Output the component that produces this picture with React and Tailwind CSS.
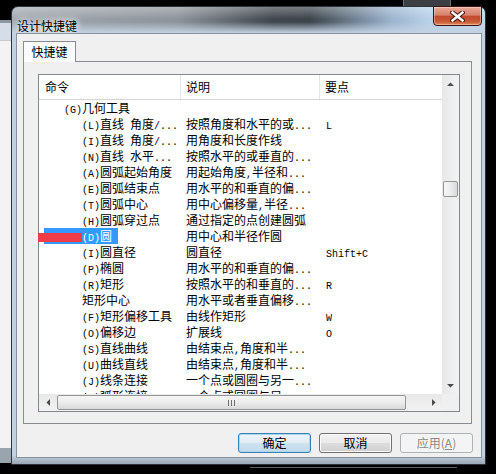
import React from 'react'

const ui = "font-['Noto_Sans_CJK_SC',sans-serif]"

const rows = [
  { c: '(G)几何工具', top: true },
  { c: '(L)直线 角度/...', d: '按照角度和水平的或...', k: 'L' },
  { c: '(I)直线 角度/...', d: '用角度和长度作线' },
  { c: '(N)直线 水平...', d: '按照水平的或垂直的...' },
  { c: '(A)圆弧起始角度', d: '用起始角度,半径和...' },
  { c: '(E)圆弧结束点', d: '用水平的和垂直的偏...' },
  { c: '(T)圆弧中心', d: '用中心偏移量,半径...' },
  { c: '(H)圆弧穿过点', d: '通过指定的点创建圆弧' },
  { c: '(D)圆', d: '用中心和半径作圆', sel: true },
  { c: '(I)圆直径', d: '圆直径', k: 'Shift+C' },
  { c: '(P)椭圆', d: '用水平的和垂直的偏...' },
  { c: '(R)矩形', d: '按照水平的和垂直的...', k: 'R' },
  { c: '矩形中心', d: '用水平或者垂直偏移...' },
  { c: '(F)矩形偏移工具', d: '由线作矩形', k: 'W' },
  { c: '(O)偏移边', d: '扩展线', k: 'O' },
  { c: '(S)直线曲线', d: '由结束点,角度和半...' },
  { c: '(U)曲线直线', d: '由结束点,角度和半...' },
  { c: '(J)线条连接', d: '一个点或圆圈与另一...' },
  { c: '(K)弧形连接', d: '一个点或圆圈与另一...' },
]

// ascii runs get a half-width mono face, like the old bitmap font
function T({ s }) {
  if (!s) return null
  return s.split(/([\x20-\x7e]+)/).map((p, i) =>
    /^[\x20-\x7e]+$/.test(p) ? (
      <span key={i} className="font-['Liberation_Mono',monospace] text-[10px]">
        {p}
      </span>
    ) : (
      p
    )
  )
}

function Arrow({ dir }) {
  const vert = dir === 'up' || dir === 'down'
  const pts = {
    up: '0,4 3.5,0.5 7,4',
    down: '0,0 7,0 3.5,3.5',
    left: '4,0 4,7 0.5,3.5',
    right: '0,0 0,7 3.5,3.5',
  }[dir]
  return (
    <svg width={vert ? 7 : 4} height={vert ? 4 : 7} viewBox={vert ? '0 0 7 4' : '0 0 4 7'}>
      <polygon points={pts} fill="#4a4a4a" />
    </svg>
  )
}

function Row({ r }) {
  return (
    <div className="relative flex h-[16px] shrink-0 whitespace-nowrap text-[12px] leading-[16px] text-black">
      {r.sel && <div className="absolute left-[5px] top-0 h-[16px] w-[74px] bg-[#3399ff]" />}
      <div className={`relative w-[142px] shrink-0 ${r.top ? 'pl-[25px]' : 'pl-[43px]'} ${r.sel ? 'text-white' : ''}`}>
        <T s={r.c} />
      </div>
      <div className="w-[139px] shrink-0 pl-[5px]">
        <T s={r.d} />
      </div>
      <div className="flex-1 pl-[6px]">
        <T s={r.k} />
      </div>
    </div>
  )
}

function Btn({ children, kind }) {
  const styles = {
    def: 'border-[#3c7fb1] bg-[linear-gradient(180deg,#eef5fa_0%,#e1ecf5_48%,#cfe2f0_52%,#c3daec_100%)] shadow-[inset_0_0_0_1px_#a8d8f4] text-black',
    norm: 'border-[#707070] bg-[linear-gradient(180deg,#f2f2f2_0%,#ebebeb_48%,#dddddd_52%,#cfcfcf_100%)] shadow-[inset_0_0_0_1px_#fbfbfb] text-black',
    off: 'border-[#adb2b5] bg-[#f4f4f4] text-[#8a8a8a]',
  }[kind]
  return (
    <div className={`flex h-[20px] w-[73px] items-center justify-center rounded-[3px] border text-[12px] leading-[16px] ${styles}`}>
      {children}
    </div>
  )
}

export default function App() {
  return (
    <div className={`relative h-[474px] w-[496px] overflow-hidden bg-black ${ui}`}>
      {/* windows behind the dialog */}
      <div className="absolute left-0 top-[20px] h-[3px] w-[11px] bg-[#8d97a1]" />
      <div className="absolute left-0 top-[23px] h-[17px] w-[11px] bg-[#d5dee8]" />
      <div className="absolute left-0 top-[40px] h-[408px] w-[11px] border-t border-[#c9c9c9] bg-[#f3f3f3]" />
      <div className="absolute left-0 top-[448px] h-[15px] w-[11px] bg-[#9aa4ae]" />
      <div className="absolute left-[403px] top-0 h-[6px] w-[48px] border-x border-[#6a6f75] bg-[#3b3f44]" />
      <div className="absolute left-[250px] top-[467px] h-[1px] w-[207px] bg-[#5b5f64]" />

      {/* dialog */}
      <div className="absolute left-[11px] top-[6px] flex h-[459px] w-[475px] flex-col rounded-t-[7px] border border-[#2c333b] bg-[linear-gradient(180deg,rgba(255,255,255,0.3)_0px,rgba(195,210,226,0)_12px,rgba(195,210,226,0)_15px,#c3d2e2_26px,#c3d2e2_calc(100%_-_9px),#9aa6b3_100%),linear-gradient(90deg,#a3aab1_0%,#8d949b_35%,#40474e_55%,#3d444b_63%,#9bb3cc_80%,#b9d0e9_88%,#c1d6ec_100%)] pb-[6px] pl-[4px] pr-[3px]">
        <div className="h-[26px] shrink-0 pl-[1px] pt-[5px]">
          <span className="text-[12px] leading-[16px] text-black [text-shadow:0_0_6px_#fff,0_0_10px_#fff]">设计快捷键</span>
        </div>

        <div className="absolute right-[3px] top-[-1px] flex h-[20px] w-[49px] items-center justify-center rounded-b-[4px] border border-[#3d1510] bg-[linear-gradient(180deg,#eaa99b_0%,#d9806c_45%,#c24a2f_52%,#c85a35_80%,#e08a5a_100%)] shadow-[inset_0_0_0_1px_rgba(255,255,255,0.35)]">
          <svg width="15" height="11" viewBox="0 0 15 11">
            <path d="M2.5 1.5 L12.5 9.5 M12.5 1.5 L2.5 9.5" stroke="#4a1e16" strokeWidth="4.6" strokeLinecap="square" />
            <path d="M2.5 1.5 L12.5 9.5 M12.5 1.5 L2.5 9.5" stroke="#fff" strokeWidth="2.4" strokeLinecap="square" />
          </svg>
        </div>

        {/* client area */}
        <div className="flex h-[425px] w-[466px] flex-col border border-[#8593a1] bg-[#f0f0f0] pl-[6px] pr-[8px] pt-[7px]">
          <div className="relative z-10 -mb-[1px] flex h-[21px] w-[53px] items-center justify-center border-x border-t border-[#898c95] bg-[#fbfbfb] pb-[1px] text-[12px] leading-[16px] text-black">
            快捷键
          </div>

          <div className="h-[363px] w-[449px] border border-[#898c95] bg-[#f0f0f0] pl-[14px] pt-[12px]">
            {/* list view */}
            <div className="grid h-[338px] w-[422px] grid-cols-[403px_17px] grid-rows-[319px_17px] border border-[#828790] bg-white">
              <div className="flex flex-col overflow-hidden">
                <div className="flex h-[25px] shrink-0 border-b border-[#d5d5d5] bg-white text-[12px] leading-[16px] text-black">
                  <div className="flex w-[142px] shrink-0 items-center border-r border-[#e5e5e5] pl-[6px]">命令</div>
                  <div className="flex w-[139px] shrink-0 items-center border-r border-[#e5e5e5] pl-[5px]">说明</div>
                  <div className="flex flex-1 items-center pl-[5px]">要点</div>
                </div>
                {rows.map((r, i) => (
                  <Row key={i} r={r} />
                ))}
              </div>

              {/* vertical scrollbar */}
              <div className="flex flex-col bg-[linear-gradient(90deg,#e8e8e8_0%,#f3f3f3_100%)]">
                <div className="flex h-[17px] shrink-0 items-center justify-center">
                  <Arrow dir="up" />
                </div>
                <div className="h-[89px] shrink-0" />
                <div className="mx-[1px] h-[16px] shrink-0 rounded-[2px] border border-[#959595] bg-[linear-gradient(90deg,#f6f6f6_0%,#ececec_50%,#d9d9d9_100%)]" />
                <div className="flex-1" />
                <div className="flex h-[17px] shrink-0 items-center justify-center">
                  <Arrow dir="down" />
                </div>
              </div>

              {/* horizontal scrollbar */}
              <div className="flex items-stretch bg-[linear-gradient(180deg,#e8e8e8_0%,#f3f3f3_100%)]">
                <div className="flex w-[17px] shrink-0 items-center justify-center">
                  <Arrow dir="left" />
                </div>
                <div className="my-[1px] ml-[1px] flex w-[349px] shrink-0 items-center justify-center gap-[2px] rounded-[2px] border border-[#959595] bg-[linear-gradient(180deg,#f6f6f6_0%,#ececec_50%,#d9d9d9_100%)]">
                  <div className="h-[6px] w-[1px] bg-[#6f6f6f]" />
                  <div className="h-[6px] w-[1px] bg-[#6f6f6f]" />
                  <div className="h-[6px] w-[1px] bg-[#6f6f6f]" />
                </div>
                <div className="flex-1" />
                <div className="flex w-[17px] shrink-0 items-center justify-center">
                  <Arrow dir="right" />
                </div>
              </div>
              <div className="bg-[#f0f0f0]" />
            </div>
          </div>

          <div className="mt-[9px] flex justify-end gap-[8px]">
            <Btn kind="def">确定</Btn>
            <Btn kind="norm">取消</Btn>
            <Btn kind="off">
              应用(<span className="underline">A</span>)
            </Btn>
          </div>
        </div>
      </div>

      {/* red marker over the selected row */}
      <div className="absolute left-[38px] top-[233px] h-[9px] w-[44px] bg-[#f03c48]" />
    </div>
  )
}
